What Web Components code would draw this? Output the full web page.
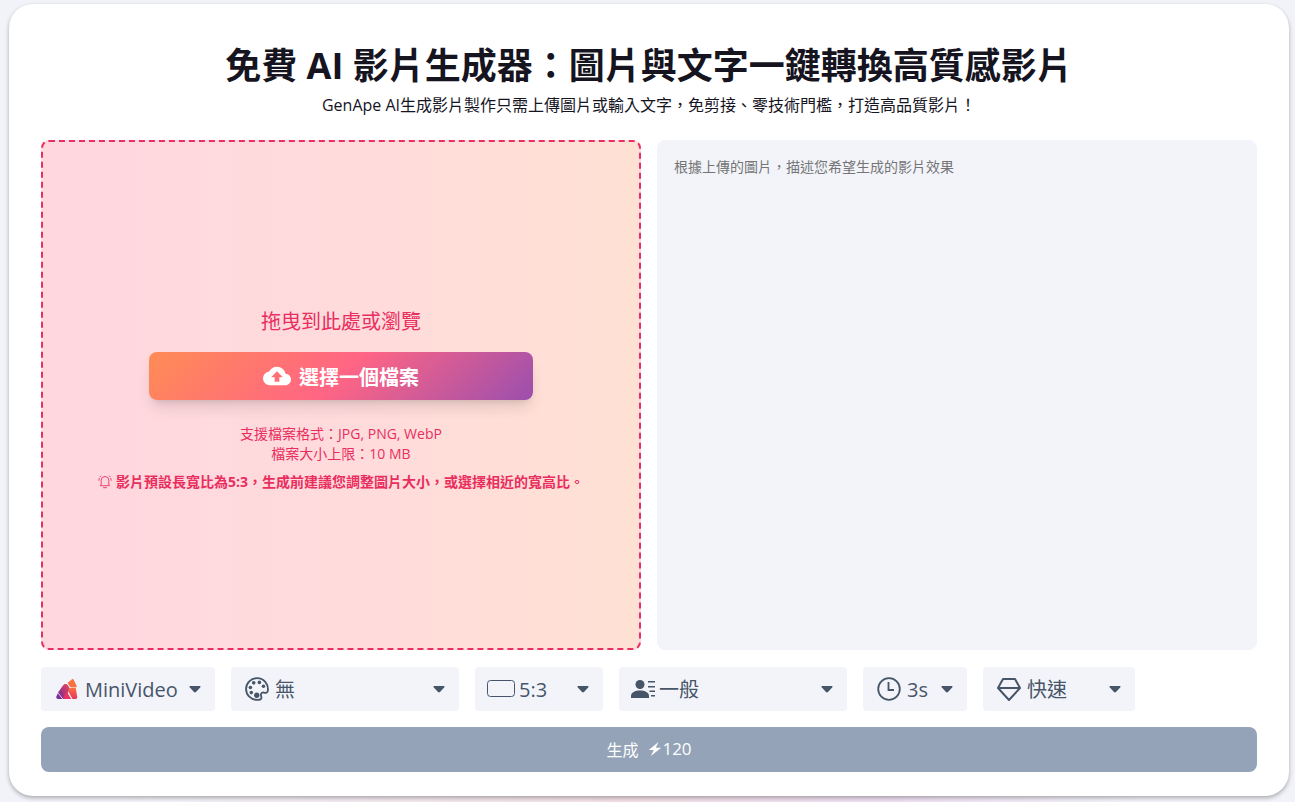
<!DOCTYPE html>
<html lang="zh-Hant">
<head>
<meta charset="utf-8">
<meta name="viewport" content="width=device-width, initial-scale=1">
<title>免費 AI 影片生成器</title>
<style>
  html {
    min-height: 100%;
    background:
      linear-gradient(90deg, #f2f3f9 10%, #f3e0e6 48%, #efdff3 68%, #f2f3f9 88%) bottom / 100% 16px no-repeat,
      #f2f3f9;
  }

  body {
    margin: 0;
    font-family: "Open Sans", "Noto Sans CJK TC", sans-serif;
    color: #15141f;
  }
</style>
</head>
<body>
<video-generator></video-generator>

<script>
const icons = {
  logo: `
    <svg width="24" height="24" viewBox="0 0 24 24">
      <defs>
        <linearGradient id="warm" x1="0" y1="0" x2="0" y2="1">
          <stop offset="0" stop-color="#f9703e"/><stop offset="1" stop-color="#e9345f"/>
        </linearGradient>
        <linearGradient id="cool" x1="1" y1="0" x2="0" y2="1">
          <stop offset="0" stop-color="#f4455a"/><stop offset="1" stop-color="#6a2a9c"/>
        </linearGradient>
      </defs>
      <path fill="#f5743f" d="M12.500 6 17 2.200c.6-.4 1.400-.2 1.700.5l2.900 6c.3.800-.1 1.500-.9 1.500h-5.200z"/>
      <path fill="url(#cool)" d="M8 8.500c1-2 3.700-2.200 4.900-.3l2 3.300L10 22H8.200L3 15.600z"/>
      <path fill="#7a2c98" d="M2.800 16.200 7.400 22H3.200c-1.500 0-2.300-1.200-1.800-2.500z"/>
      <path fill="#e93362" d="m11.300 14 4.900 8h-6.100c-1.300 0-1.900-.9-1.400-2.300z"/>
      <path fill="url(#warm)" d="M13.200 14.300c.4-2.100 1.800-3.500 3.900-3.500h3.600l1.500 9.200c.2 1.200-.6 2-1.700 2h-3z"/>
    </svg>`,
  palette: `
    <svg width="24" height="24" viewBox="0 0 16 16" fill="currentColor">
      <path fill="none" stroke="currentColor" stroke-width="1.200" d="M8 .7C4 .7.7 4 .7 8S4 15.300 8 15.300c1.500 0 2.500-.2 2.800-.9.500-1-.3-1.700-.2-2.700.1-1.300 1.100-1.500 2.100-1.300 1.300.3 2.300.2 2.500-1.100C15.900 4.500 12.400.7 8 .7z"/>
      <circle cx="5.800" cy="3.900" r="1.200"/><circle cx="9.600" cy="3.600" r="1.200"/>
      <circle cx="12.300" cy="6.200" r="1.200"/><circle cx="3.600" cy="7" r="1.200"/>
      <circle cx="4.200" cy="10.400" r="1.200"/><circle cx="7.800" cy="12.200" r="1.800"/>
    </svg>`,
  ratio: `
    <svg width="28" height="24" viewBox="0 0 28 24" fill="none" stroke="currentColor">
      <rect x=".5" y="3.500" width="27" height="16" rx="3"/>
    </svg>`,
  person: `
    <svg width="24" height="24" viewBox="0 0 24 24" fill="currentColor">
      <circle cx="9" cy="7.500" r="4.500"/>
      <path d="M0 21v-2c0-3.600 4-5.500 9-5.500s9 1.900 9 5.500v2z"/>
      <path d="M17 4h7v1.500h-7zM17 9h7v1.500h-7zM18.500 13.500H24V15h-5.500zM20 18h4v1.500h-4z"/>
    </svg>`,
  clock: `
    <svg width="24" height="24" viewBox="0 0 24 24" fill="none" stroke="currentColor" stroke-width="1.800">
      <circle cx="12" cy="12" r="10.800"/>
      <path d="M11.500 5v8h5.500"/>
    </svg>`,
  diamond: `
    <svg width="24" height="24" viewBox="0 0 24 24" fill="none" stroke="currentColor" stroke-width="2" stroke-linejoin="round">
      <path d="M6 2h12l5 9-11 12L1 11zM1.500 11h21"/>
    </svg>`,
  upload: `
    <svg width="28" height="28" viewBox="0 0 24 24" fill="currentColor">
      <path d="M19.350 10.040A7.490 7.490 0 0 0 12 4C9.110 4 6.600 5.640 5.350 8.040A5.994 5.994 0 0 0 0 14c0 3.310 2.690 6 6 6h13c2.760 0 5-2.240 5-5 0-2.640-2.050-4.780-4.650-4.960zM14 13v4h-4v-4H7l5-5 5 5z"/>
    </svg>`,
  bell: `
    <svg width="14" height="14" viewBox="0 0 14 14" fill="none" stroke="currentColor" stroke-width=".9" stroke-linecap="round" stroke-linejoin="round">
      <path d="M2.500 10.700h9L10.800 9V5.300a3.800 3.800 0 0 0-7.600 0V9zM5.500 12.700h3M.8 5.300 1.300 3.300M13.200 5.300 12.700 3.300M2 1.700 2.700 1M12 1.700 11.300 1"/>
    </svg>`,
  bolt: `
    <svg width="14" height="16" viewBox="0 0 14 16" fill="currentColor">
      <path d="M10.400 1 .8 9h5l-2.900 6L13.200 6.800H7.800z"/>
    </svg>`,
  caret: `
    <svg width="12" height="8" viewBox="0 0 12 8" fill="currentColor">
      <path d="M1.200 1h9.600c.8 0 1 .8.6 1.300L7 7c-.6.600-1.400.6-2 0L.6 2.300C.1 1.800.4 1 1.200 1z"/>
    </svg>`
};

class AppIcon extends HTMLElement {
  constructor() {
    super();
    this.attachShadow({ mode: 'open' });
  }

  connectedCallback() {
    this.shadowRoot.innerHTML = `
      <style>
        :host { display: inline-flex; flex: none; }
        svg { display: block; }
      </style>
      ${icons[this.getAttribute('name')] || ''}
    `;
  }
}

class VideoHeading extends HTMLElement {
  constructor() {
    super();
    this.attachShadow({ mode: 'open' });
  }

  connectedCallback() {
    this.shadowRoot.innerHTML = `
      <style>
        :host { display: block; text-align: center; }
        h1 { margin: 0; font-size: 36px; line-height: 44px; font-weight: 700; }
        p { margin: 4px 0 0; font-size: 16px; line-height: 26px; }
      </style>
      <h1><slot name="title"></slot></h1>
      <p><slot></slot></p>
    `;
  }
}

class DropZone extends HTMLElement {
  constructor() {
    super();
    this.attachShadow({ mode: 'open' });
  }

  connectedCallback() {
    this.shadowRoot.innerHTML = `
      <style>
        :host {
          box-sizing: border-box;
          display: flex;
          flex-direction: column;
          align-items: center;
          justify-content: center;
          padding: 26px 16px 16px;
          border: 2px dashed #e92e63;
          border-radius: 8px;
          background: linear-gradient(90deg, #ffd7df, #ffdbdc 50%, #ffe1d4);
          color: #e92e5f;
          text-align: center;
        }
        p { margin: 0; font-size: 14px; line-height: 20px; }
        .lead { font-size: 20px; line-height: 28px; margin-bottom: 16px; }
        button {
          display: flex;
          align-items: center;
          justify-content: center;
          gap: 8px;
          width: 100%;
          max-width: 384px;
          height: 48px;
          margin-bottom: 24px;
          border: 0;
          border-radius: 8px;
          background: linear-gradient(135deg, #ff8c55, #ff6584 50%, #9b4fae);
          box-shadow: 0 10px 15px -3px rgb(0 0 0 / 12%), 0 4px 6px -4px rgb(0 0 0 / 12%);
          color: #fff;
          font: inherit;
          font-size: 20px;
          font-weight: 700;
        }
        .note {
          display: flex;
          align-items: center;
          gap: 4px;
          margin-top: 8px;
          font-weight: 700;
        }
      </style>
      <p class="lead"><slot name="lead"></slot></p>
      <button type="button"><app-icon name="upload"></app-icon><slot name="action"></slot></button>
      <p><slot name="formats"></slot></p>
      <p><slot name="limit"></slot></p>
      <p class="note"><app-icon name="bell"></app-icon><slot name="note"></slot></p>
    `;
  }
}

class PromptBox extends HTMLElement {
  constructor() {
    super();
    this.attachShadow({ mode: 'open' });
  }

  connectedCallback() {
    const hint = this.getAttribute('placeholder') || '';
    this.shadowRoot.innerHTML = `
      <style>
        :host { display: flex; }
        textarea {
          box-sizing: border-box;
          flex: 1;
          min-width: 0;
          padding: 16px;
          border: 1px solid #f2f4fa;
          border-radius: 8px;
          background: #f2f4fa;
          color: #15141f;
          font: inherit;
          font-size: 14px;
          line-height: 20px;
          resize: none;
        }
        textarea::placeholder { color: #757575; }
      </style>
      <textarea aria-label="${hint}" placeholder="${hint}"></textarea>
    `;
  }
}

class OptionSelect extends HTMLElement {
  constructor() {
    super();
    this.attachShadow({ mode: 'open' });
  }

  connectedCallback() {
    const value = this.getAttribute('value') || '';
    this.shadowRoot.innerHTML = `
      <style>
        :host { display: grid; color: #475569; --start: 14px; --text: 44px; }
        :host([compact]) { --start: 12px; --text: 40px; }
        :host([wide-icon]) { --start: 12px; }
        select, app-icon { grid-area: 1 / 1; }
        select {
          box-sizing: border-box;
          appearance: none;
          width: 100%;
          height: 44px;
          padding: 0 32px 0 var(--text);
          border: 0;
          border-radius: 4px;
          background: #f2f4fa;
          color: inherit;
          font: inherit;
          font-size: 20px;
        }
        app-icon { align-self: center; pointer-events: none; z-index: 1; }
        .lead { justify-self: start; margin-left: var(--start); }
        .caret { justify-self: end; margin-right: 14px; }
      </style>
      <select aria-label="${this.getAttribute('label')}"><option>${value}</option></select>
      <app-icon class="lead" name="${this.getAttribute('icon')}"></app-icon>
      <app-icon class="caret" name="caret"></app-icon>
    `;
  }
}

class GenerateButton extends HTMLElement {
  constructor() {
    super();
    this.attachShadow({ mode: 'open' });
  }

  connectedCallback() {
    this.shadowRoot.innerHTML = `
      <style>
        :host { display: block; }
        button {
          display: flex;
          align-items: center;
          justify-content: center;
          width: 100%;
          height: 45px;
          padding: 0 0 2px;
          border: 0;
          border-radius: 8px;
          background: #94a3b8;
          color: #fff;
          font: inherit;
          font-size: 16px;
        }
        .cost { display: flex; align-items: center; margin-left: 10px; font-size: 17px; }
      </style>
      <button type="button">
        <slot></slot>
        <span class="cost"><app-icon name="bolt"></app-icon><slot name="cost"></slot></span>
      </button>
    `;
  }
}

class VideoGenerator extends HTMLElement {
  constructor() {
    super();
    this.attachShadow({ mode: 'open' });
  }

  connectedCallback() {
    this.shadowRoot.innerHTML = `
      <style>
        :host { display: block; padding: 4px 6px 6px 9px; }
        main {
          padding: 40px 32px 24px;
          border-radius: 24px;
          background: #fff;
          box-shadow: 0 2px 4px rgb(0 0 0 / 30%);
        }
        .panels {
          display: grid;
          grid-template-columns: repeat(auto-fit, minmax(320px, 1fr));
          grid-auto-rows: minmax(510px, auto);
          gap: 16px;
          margin-top: 22px;
        }
        .options { display: flex; flex-wrap: wrap; gap: 16px; margin: 17px 0 16px; }
        .model { width: 174px; }
        .wide { width: 228px; }
        .ratio { width: 128px; }
        .time { width: 104px; }
        .speed { width: 152px; }
      </style>
      <main>
        <video-heading>
          <span slot="title">免費 AI 影片生成器：圖片與文字一鍵轉換高質感影片</span>
          GenApe AI生成影片製作只需上傳圖片或輸入文字，免剪接、零技術門檻，打造高品質影片！
        </video-heading>
        <div class="panels">
          <drop-zone>
            <span slot="lead">拖曳到此處或瀏覽</span>
            <span slot="action">選擇一個檔案</span>
            <span slot="formats">支援檔案格式：JPG, PNG, WebP</span>
            <span slot="limit">檔案大小上限：10 MB</span>
            <span slot="note">影片預設長寬比為5:3，生成前建議您調整圖片大小，或選擇相近的寬高比。</span>
          </drop-zone>
          <prompt-box placeholder="根據上傳的圖片，描述您希望生成的影片效果"></prompt-box>
        </div>
        <div class="options">
          <option-select class="model" icon="logo" label="模型" value="MiniVideo"></option-select>
          <option-select class="wide" icon="palette" label="風格" value="無"></option-select>
          <option-select class="ratio" wide-icon icon="ratio" label="長寬比" value="5:3"></option-select>
          <option-select class="wide" compact icon="person" label="模式" value="一般"></option-select>
          <option-select class="time" icon="clock" label="長度" value="3s"></option-select>
          <option-select class="speed" icon="diamond" label="速度" value="快速"></option-select>
        </div>
        <generate-button>生成<span slot="cost">120</span></generate-button>
      </main>
    `;
  }
}

customElements.define('app-icon', AppIcon);
customElements.define('video-heading', VideoHeading);
customElements.define('drop-zone', DropZone);
customElements.define('prompt-box', PromptBox);
customElements.define('option-select', OptionSelect);
customElements.define('generate-button', GenerateButton);
customElements.define('video-generator', VideoGenerator);
</script>
</body>
</html>
